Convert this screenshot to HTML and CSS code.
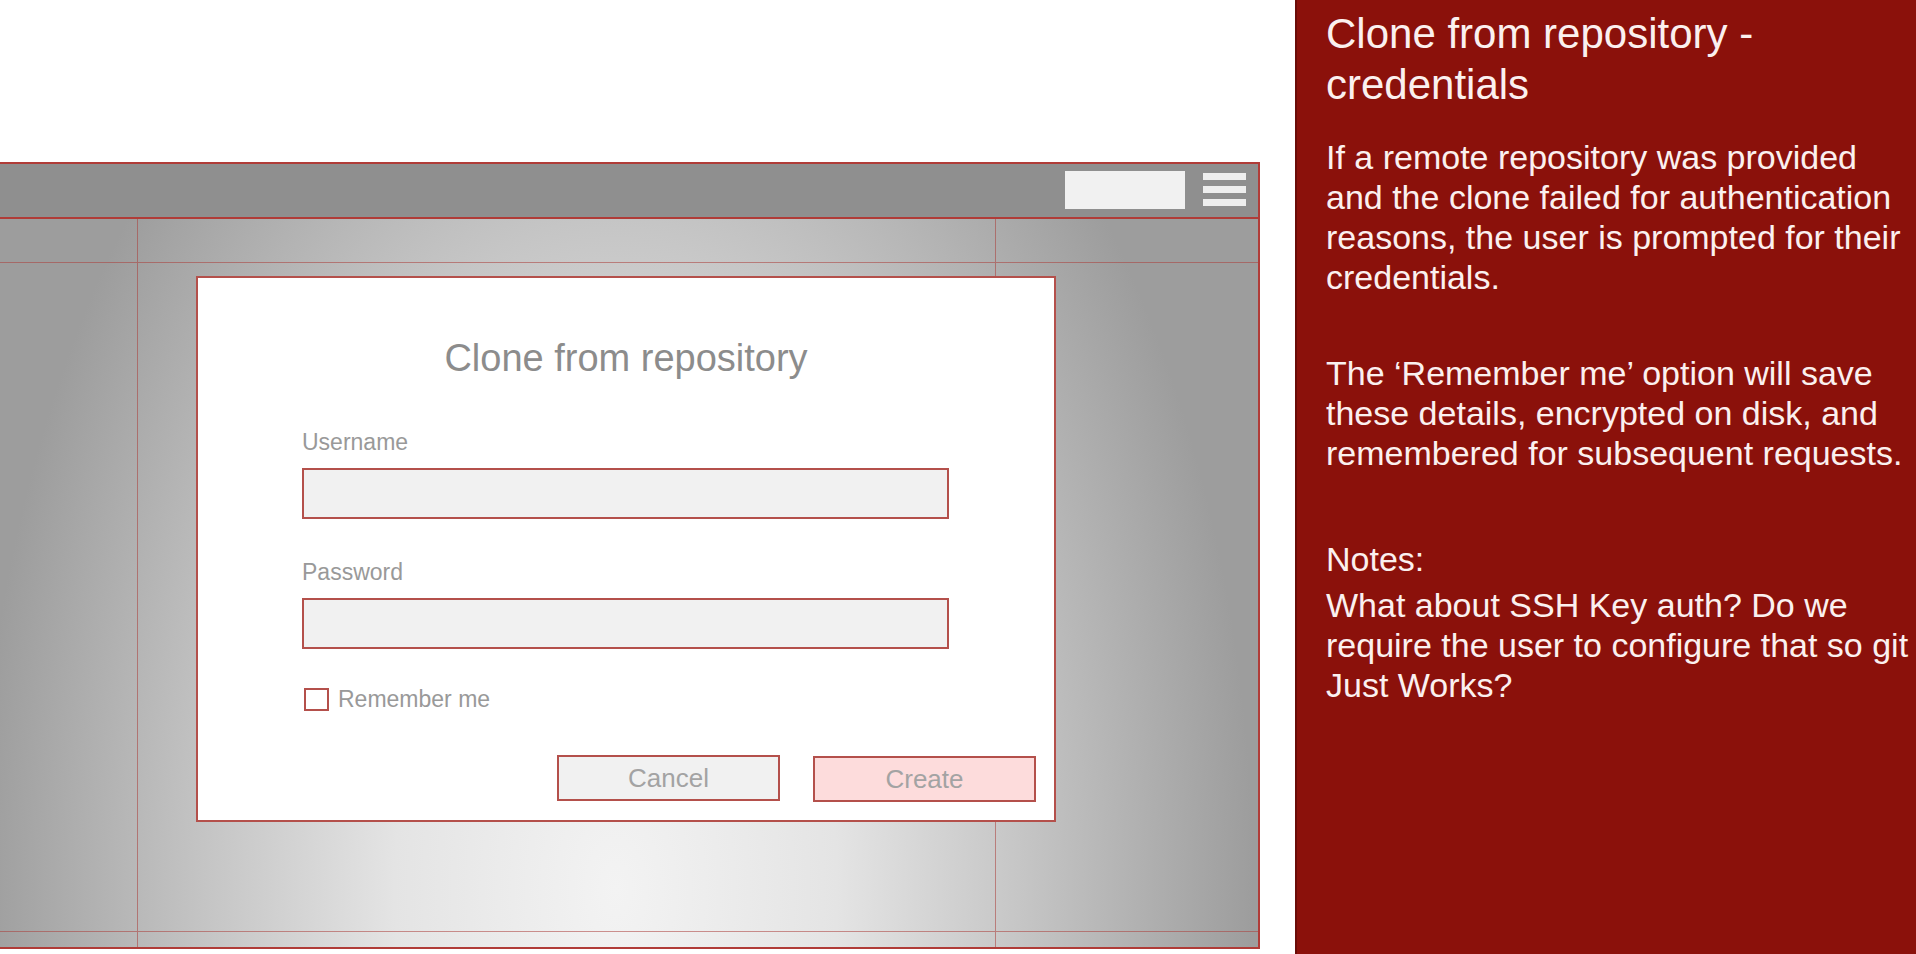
FILE: index.html
```html
<!DOCTYPE html>
<html lang="en">
<head>
<meta charset="utf-8">
<title>Clone from repository - credentials</title>
<link rel="stylesheet" href="styles.css">
</head>
<body>
<div class="page">
  <div class="stage">
    <div class="browser">
      <div class="toolbar">
        <div class="search"></div>
        <div class="menu"><span></span><span></span><span></span></div>
      </div>
      <div class="content">
        <div class="guides">
          <div class="cell c1 r1"></div><div class="cell c2 r1"></div><div class="cell c3 r1"></div>
          <div class="cell c1 r2"></div><div class="cell c2 r2"></div><div class="cell c3 r2"></div>
          <div class="cell c1 r3"></div><div class="cell c2 r3"></div><div class="cell c3 r3"></div>
        </div>
        <div class="dialog">
          <div class="dialog-title">Clone from repository</div>
          <div class="form">
            <div class="label first">Username</div>
            <div class="input"></div>
            <div class="label">Password</div>
            <div class="input"></div>
            <div class="check-row">
              <span class="checkbox"></span>
              <span class="check-label">Remember me</span>
            </div>
          </div>
          <div class="buttons">
            <div class="btn cancel">Cancel</div>
            <div class="btn create">Create</div>
          </div>
        </div>
      </div>
    </div>
  </div>
  <aside class="panel">
    <h1 class="panel-title">Clone from repository - credentials</h1>
    <p class="p1">If a remote repository was provided and the clone failed for authentication reasons, the user is prompted for their credentials.</p>
    <p class="p2">The ‘Remember me’ option will save these details, encrypted on disk, and remembered for subsequent requests.</p>
    <p class="notes">Notes:</p>
    <p class="p3">What about SSH Key auth? Do we require the user to configure that so git Just Works?</p>
  </aside>
</div>
</body>
</html>
```

FILE: styles.css
```css
* { box-sizing: border-box; }
html, body { margin: 0; padding: 0; }
body {
  width: 1916px;
  height: 954px;
  overflow: hidden;
  background: #ffffff;
  font-family: "Liberation Sans", Arial, Helvetica, sans-serif;
}
.page {
  display: flex;
  width: 1916px;
  height: 954px;
}
.stage {
  width: 1295px;
  flex: none;
  padding-top: 162px;
}
.browser {
  width: 1262px;
  height: 787px;
  margin-left: -2px;
  border: 2px solid #b03c38;
  display: flex;
  flex-direction: column;
}
.toolbar {
  height: 55px;
  flex: none;
  background: #8f8f8f;
  border-bottom: 2px solid #b03c38;
  display: flex;
  justify-content: flex-end;
  align-items: flex-start;
  padding: 7px 12px 0 0;
  gap: 18px;
}
.search {
  width: 120px;
  height: 38px;
  background: #f1f1f1;
}
.menu {
  width: 43px;
  padding-top: 2px;
  display: flex;
  flex-direction: column;
  gap: 6px;
}
.menu span {
  display: block;
  height: 7px;
  background: #eeeeee;
}
.content {
  position: relative;
  flex: 1;
  background: radial-gradient(ellipse 671px 1100px at 616px 670px, #f3f3f3 0%, #e4e4e4 33%, #c6c6c6 60%, #9d9d9d 95%);
}
.guides {
  height: 100%;
  display: grid;
  grid-template-columns: 138px 858px 1fr;
  grid-template-rows: 44px 1fr 16px;
}
.cell { border: 0 solid rgba(172, 62, 58, 0.55); }
.c1, .c2 { border-right-width: 1px; }
.r1 { border-bottom-width: 1px; }
.r3 { border-top-width: 1px; }

.dialog {
  position: absolute;
  top: 57px;
  left: 196px;
  width: 860px;
  height: 546px;
  background: #ffffff;
  border: 2px solid #b4504b;
  padding: 58px 18px 18px 18px;
}
.dialog-title {
  text-align: center;
  font-size: 38px;
  line-height: 44px;
  color: #8c8c8c;
}
.form {
  width: 647px;
  margin-left: 86px;
}
.label {
  margin-top: 39px;
  font-size: 23px;
  line-height: 28px;
  color: #999999;
}
.label.first { margin-top: 48px; }
.input {
  margin-top: 12px;
  height: 51px;
  background: #f1f1f1;
  border: 2px solid #b4504b;
}
.check-row {
  margin-top: 36px;
  display: flex;
  align-items: center;
  gap: 9px;
  padding-left: 2px;
}
.checkbox {
  width: 25px;
  height: 23px;
  border: 2px solid #b4504b;
  background: #ffffff;
}
.check-label {
  font-size: 23px;
  line-height: 28px;
  color: #999999;
}
.buttons {
  margin-top: 42px;
  display: flex;
  justify-content: flex-end;
  gap: 33px;
}
.btn {
  width: 223px;
  height: 46px;
  border: 2px solid #b4504b;
  background: #f1f1f1;
  color: #a3a3a3;
  font-size: 26px;
  line-height: 42px;
  text-align: center;
}
.btn.create {
  background: #fddcdc;
  margin-top: 1px;
}

.panel {
  width: 621px;
  flex: none;
  height: 954px;
  background: #8b110b;
  border-left: 2px solid #6a0c08;
  padding: 8px 2px 0 29px;
  color: #fbf0ef;
}
.panel-title {
  margin: 0;
  font-weight: normal;
  font-size: 42px;
  line-height: 51px;
}
.panel p {
  margin: 0;
  font-size: 34px;
  line-height: 40px;
}
.panel .p1 { margin-top: 27px; }
.panel .p2 { margin-top: 56px; }
.panel .notes { margin-top: 66px; margin-bottom: 6px; }
```
